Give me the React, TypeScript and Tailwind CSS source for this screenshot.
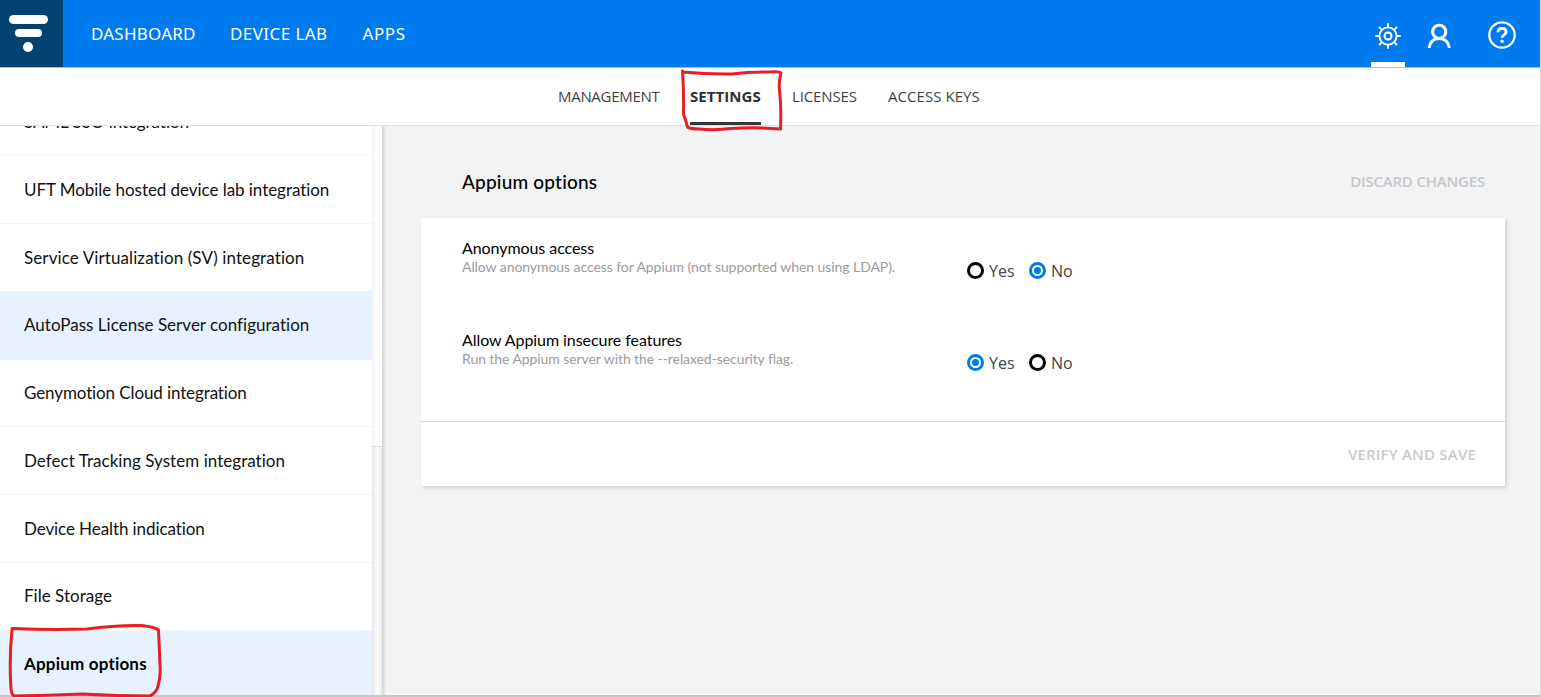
const OPEN = "font-['Open_Sans',sans-serif]";

const navItems = [
  { label: "DASHBOARD", cls: "w-[139px] tracking-[0.22px]" },
  { label: "DEVICE LAB", cls: "w-[132.5px] tracking-[0.42px]" },
  { label: "APPS", cls: "tracking-[0.6px]" },
];

const tabs = [
  { label: "MANAGEMENT", cls: "w-[132px] tracking-[-0.3px]" },
  { label: "SETTINGS", cls: "w-[102px] tracking-[0.05px]", active: true },
  { label: "LICENSES", cls: "w-[96px] tracking-[-0.12px]" },
  { label: "ACCESS KEYS", cls: "w-[100px] tracking-[0.05px]" },
];

const sections = [
  { label: "SAML SSO integration", cls: "tracking-[-0.07px]" },
  { label: "UFT Mobile hosted device lab integration", cls: "tracking-[-0.05px]" },
  { label: "Service Virtualization (SV) integration", cls: "tracking-[0.1px]" },
  { label: "AutoPass License Server configuration", cls: "tracking-[0.02px]", highlighted: true },
  { label: "Genymotion Cloud integration", cls: "tracking-[-0.11px]" },
  { label: "Defect Tracking System integration", cls: "tracking-[0.04px]" },
  { label: "Device Health indication", cls: "tracking-[-0.09px]" },
  { label: "File Storage", cls: "tracking-[0.02px]" },
  { label: "Appium options", cls: "font-bold tracking-[0.19px] text-black", highlighted: true },
];

const options = [
  {
    title: "Anonymous access",
    titleCls: "tracking-[-0.07px]",
    hint: "Allow anonymous access for Appium (not supported when using LDAP).",
    hintCls: "tracking-[-0.07px]",
    value: "No",
  },
  {
    title: "Allow Appium insecure features",
    titleCls: "tracking-[-0.06px]",
    hint: "Run the Appium server with the --relaxed-security flag.",
    hintCls: "tracking-[-0.08px]",
    value: "Yes",
  },
];

function GearIcon() {
  return (
    <svg viewBox="0 0 26 26" className="h-[26px] w-[26px]" fill="none" stroke="white">
      <circle cx="13" cy="13" r="8.6" strokeWidth="1.9" />
      <circle cx="13" cy="13" r="3.5" strokeWidth="2" />
      <path
        strokeWidth="2"
        d="M13 0.3v4M13 21.7v4M0.3 13h4M21.7 13h4M3.9 3.9l3 3M19.1 19.1l3 3M3.9 22.1l3-3M19.1 6.9l3-3"
      />
    </svg>
  );
}

function UserIcon() {
  return (
    <svg viewBox="0 0 24 26" className="h-[26px] w-6" fill="none" stroke="white" strokeWidth="3">
      <circle cx="12.2" cy="8.8" r="6.6" />
      <path d="M2.1 25c.4-5.6 4.3-9.6 10.1-9.6s9.7 4 10.1 9.6" />
    </svg>
  );
}

function HelpIcon() {
  return (
    <svg viewBox="0 0 28 28" className="h-7 w-7" fill="none" stroke="white">
      <circle cx="14" cy="14" r="12.7" strokeWidth="2.3" />
      <path strokeWidth="2.8" d="M10 11.3c0-2.4 1.7-3.8 4.1-3.800s4 1.400 4 3.500c0 2.900-4 2.900-4 5.700" />
      <circle cx="14.1" cy="20.2" r="1.7" fill="white" stroke="none" />
    </svg>
  );
}

function Radio({ label, checked }: { label: string; checked: boolean }) {
  return (
    <label className={`${OPEN} flex h-[17px] items-center gap-[5px] text-base leading-none text-[#444]`}>
      <span
        className={
          checked
            ? "flex h-[17px] w-[17px] items-center justify-center rounded-full border-3 border-[#007aef]"
            : "h-[17px] w-[17px] rounded-full border-3 border-black"
        }
      >
        {checked && <span className="h-[7px] w-[7px] rounded-full bg-[#007aef]" />}
      </span>
      {label}
    </label>
  );
}

export default function App() {
  return (
    <div className="relative flex h-[697px] w-[1541px] flex-col overflow-hidden border-r border-[#d4d6d8] bg-[#f1f3f5] font-[Lato,sans-serif] text-[#111]">
      <header className="flex h-[68px] shrink-0 border-b border-[#a9c0da] bg-[#007aef] text-white">
        <div className="flex w-[62.500px] flex-col items-center bg-[#01426f] pt-[15px] pr-[6px]">
          <span className="h-[9px] w-[39px] rounded-full bg-white" />
          <span className="mt-[5px] h-[8px] w-[27px] rounded-full bg-white" />
          <span className="mt-[5px] h-[10px] w-[10px] rounded-full bg-white" />
        </div>
        <nav className="flex grow pt-[22px] pl-[28.5px] font-['Noto_Sans',sans-serif] text-[17px] leading-6 whitespace-nowrap">
          {navItems.map((n) => (
            <a key={n.label} className={n.cls}>
              {n.label}
            </a>
          ))}
        </nav>
        <div className="flex pr-[24px]">
          <div className="flex w-[34px] flex-col items-center justify-between pt-[23px]">
            <GearIcon />
            <span className="h-[5px] w-full bg-white" />
          </div>
          <div className="pt-[23px] pl-[22px]">
            <UserIcon />
          </div>
          <div className="pt-[21px] pl-[37px]">
            <HelpIcon />
          </div>
        </div>
      </header>

      <nav
        className={`${OPEN} flex h-[58px] shrink-0 border-b border-[#dfe0e1] bg-white pl-[558px] text-[15px] whitespace-nowrap text-[#3f4345]`}
      >
        {tabs.map((t) => (
          <div key={t.label} className={t.cls}>
            <span
              className={
                t.active
                  ? "inline-flex h-[57px] flex-col border-b-[3px] border-[#32373a] pt-[17px] leading-[22px] font-bold text-[#2c3033]"
                  : "inline-flex h-[57px] flex-col pt-[17px] leading-[22px]"
              }
            >
              {t.label}
            </span>
          </div>
        ))}
      </nav>

      <div className="flex min-h-0 grow">
        <aside className="flex w-[386px] shrink-0 overflow-hidden">
          <ul className="-mt-[37.5px] w-[372px] shrink-0 bg-white text-[17px] whitespace-nowrap">
            {sections.map((s) => (
              <li
                key={s.label}
                className={
                  s.highlighted
                    ? "flex h-[67.75px] items-center border-b border-[#f3f4f5] bg-[#e6f2ff] pl-6"
                    : "flex h-[67.75px] items-center border-b border-[#f3f4f5] bg-white pl-6"
                }
              >
                <span className={s.cls}>{s.label}</span>
              </li>
            ))}
          </ul>
          <div className="flex w-[10px] flex-col bg-linear-to-r from-[#e6e6e6] via-[#fbfbfb] to-[#ededed]">
            <div className="h-[321px] border-b border-[#dcdcdc] bg-linear-to-r from-[#f6f6f6] via-[#fcfcfc] to-[#fdfdfd]" />
          </div>
          <div className="w-[4px] bg-linear-to-r from-[#d2d3d5] to-[#f1f3f5]" />
        </aside>

        <main className="flex grow flex-col pt-[44px] pr-[35px] pl-[35px]">
          <div className="flex h-[48px] justify-between pr-[20px] pl-[41px]">
            <h1 className="text-[19px] leading-6 font-medium tracking-[0.19px] text-black">Appium options</h1>
            <button
              className={`${OPEN} -mt-px h-6 text-[15px] leading-6 font-semibold tracking-[-0.19px] whitespace-nowrap text-[#c6c7c8]`}
            >
              DISCARD CHANGES
            </button>
          </div>
          <section className="h-[268px] bg-white shadow-[2px_2px_3px_#d2d4d6]">
            <div className="h-[204px] border-b border-[#d3d4d5] pt-[20px] pl-[41px]">
              {options.map((o) => (
                <div key={o.title} className="flex h-[92px]">
                  <div className="w-[505px] whitespace-nowrap">
                    <div className={`text-base leading-[20px] text-black ${o.titleCls}`}>{o.title}</div>
                    <div className={`text-sm leading-[17px] text-[#9c9c9c] ${o.hintCls}`}>{o.hint}</div>
                  </div>
                  <div className="flex gap-[14px] pt-[24px]">
                    <div className="w-[48px]">
                      <Radio label="Yes" checked={o.value === "Yes"} />
                    </div>
                    <Radio label="No" checked={o.value === "No"} />
                  </div>
                </div>
              ))}
            </div>
            <div className="flex h-[64px] items-center justify-end pr-[29px]">
              <button className={`${OPEN} text-[15px] leading-6 font-semibold tracking-[0.2px] text-[#cacaca]`}>
                VERIFY AND SAVE
              </button>
            </div>
          </section>
        </main>
      </div>

      <div className="absolute bottom-0 left-0 h-[2px] w-full bg-[#c3c5c7]" />
      <svg
        className="pointer-events-none absolute inset-0 h-[697px] w-[1541px]"
        fill="none"
        stroke="#e81e22"
        strokeWidth="3"
        strokeLinecap="round"
        strokeLinejoin="round"
      >
        <path d="M682.5 71Q684 94 683.5 114Q686 121 687.5 127Q690 129 699 129Q715 130.5 731 128.5Q757 127 780.5 129Q781.5 108 779.5 90Q778.5 82 781 73Q779 71 770 72Q750 71.5 732 74Q708 74.5 683 72" />
        <path d="M12 630Q9 660 11 688Q11 694 14 696Q48 695.5 83 694Q117 696 150 696Q157 692 158 686Q161 676 160 664L158.5 630Q155 627 142 625.5Q115 625 87 629Q50 630 12 628.5" />
      </svg>
    </div>
  );
}
